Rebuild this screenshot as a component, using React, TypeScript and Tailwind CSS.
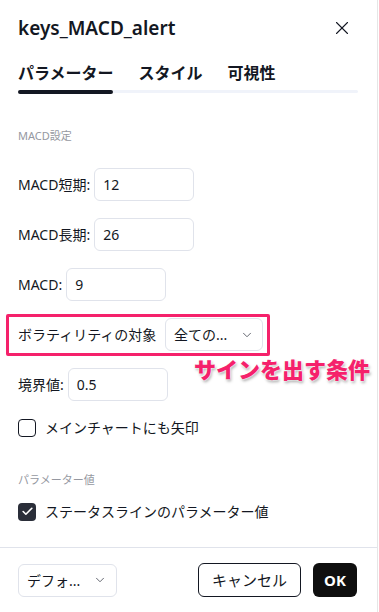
import { X, ChevronDown, Check } from 'lucide-react';

const font = { fontFamily: '"Noto Sans", "Noto Sans CJK JP", sans-serif' };

function Field({ label, value, w = 'w-[100px]' }: { label: string; value: string; w?: string }) {
  return (
    <div className="flex items-center gap-[4px]">
      <span className="text-[14px] text-[#131722]">{label}</span>
      <div className={`h-[33px] ${w} rounded-[6px] border border-[#e0e3eb] flex items-center px-[8px] text-[14px] text-[#131722]`}>
        {value}
      </div>
    </div>
  );
}

export default function App() {
  return (
    <div className="w-[379px] h-[612px] bg-white overflow-hidden" style={font}>
      <div className="w-[378px] h-[612px] border-r border-[#e6e6e6] flex flex-col">
        <div className="h-[56px] flex items-center justify-between pl-[18px] pr-[24px]">
          <h1 className="text-[19px] font-semibold text-[#131722]">keys_MACD_alert</h1>
          <X size={22} strokeWidth={1.2} className="text-[#131722]" />
        </div>

        <div className="px-[18px]">
          <div className="flex gap-[25px] pt-[5px] h-[33px] text-[16px] font-bold text-[#131722]">
            <span>パラメーター</span>
            <span>スタイル</span>
            <span>可視性</span>
          </div>
          <div className="flex items-center w-[340px] h-[5px]">
            <div className="w-[95px] h-[4px] rounded-full bg-[#131722]" />
            <div className="flex-1 h-[3px] rounded-r-full bg-[#f0f3fa]" />
          </div>
        </div>

        <div className="px-[18px] pt-[34px] flex flex-col">
          <div className="text-[11px] leading-[16px] text-[#9598a1]">MACD設定</div>
          <div className="mt-[24px] flex flex-col gap-[17px]">
            <Field label="MACD短期:" value="12" />
            <Field label="MACD長期:" value="26" />
            <Field label="MACD:" value="9" />
          </div>

          <div className="relative mt-[13px]">
            <div className="ml-[-12px] w-[264px] border-[3px] border-[#f5216b] rounded-[2px] pl-[9px] pr-[4px] pt-[1px] pb-[2px] flex items-center justify-between">
              <span className="text-[14px] text-[#131722]">ボラティリティの対象</span>
              <div className="h-[33px] w-[98px] rounded-[6px] border border-[#e0e3eb] flex items-center justify-between pl-[8px] pr-[8px] text-[14px] text-[#131722]">
                <span>全ての...</span>
                <ChevronDown size={14} strokeWidth={1.5} className="text-[#50535e]" />
              </div>
            </div>
            <span
              className="absolute left-[176px] top-[41px] text-[22px] font-black leading-[28px] text-[#f5216b] whitespace-nowrap"
              style={{ textShadow: '0 0 2px #fff, 0 0 2px #fff, 1px 2px 3px rgba(0,0,0,0.35)' }}
            >
              サインを出す条件
            </span>
          </div>

          <div className="mt-[12px]">
            <Field label="境界値:" value="0.5" />
          </div>

          <label className="mt-[16px] flex items-center gap-[9px]">
            <span className="w-[18px] h-[18px] rounded-[4px] border border-[#131722]" />
            <span className="text-[14px] text-[#131722]">メインチャートにも矢印</span>
          </label>

          <div className="mt-[34px] text-[11px] leading-[16px] text-[#9598a1]">パラメーター値</div>

          <label className="mt-[13px] flex items-center gap-[9px]">
            <span className="w-[18px] h-[18px] rounded-[4px] bg-[#2a2e39] flex items-center justify-center">
              <Check size={13} strokeWidth={3} className="text-white" />
            </span>
            <span className="text-[14px] text-[#131722]">ステータスラインのパラメーター値</span>
          </label>
        </div>

        <div className="mt-auto border-t border-[#e0e3eb] h-[65px] px-[18px] flex items-center justify-between">
          <div className="h-[33px] w-[99px] rounded-[6px] border border-[#e0e3eb] flex items-center justify-between pl-[8px] pr-[9px] text-[14px] text-[#131722]">
            <span>デフォ...</span>
            <ChevronDown size={14} strokeWidth={1.5} className="text-[#50535e]" />
          </div>
          <div className="flex items-center gap-[12px] pr-[2px]">
            <button className="h-[34px] w-[103px] rounded-[6px] border border-[#131722] text-[15px] text-[#131722]">
              キャンセル
            </button>
            <button className="h-[34px] w-[44px] rounded-[6px] bg-[#0f0f0f] text-[15px] font-bold text-white">
              OK
            </button>
          </div>
        </div>
      </div>
    </div>
  );
}
